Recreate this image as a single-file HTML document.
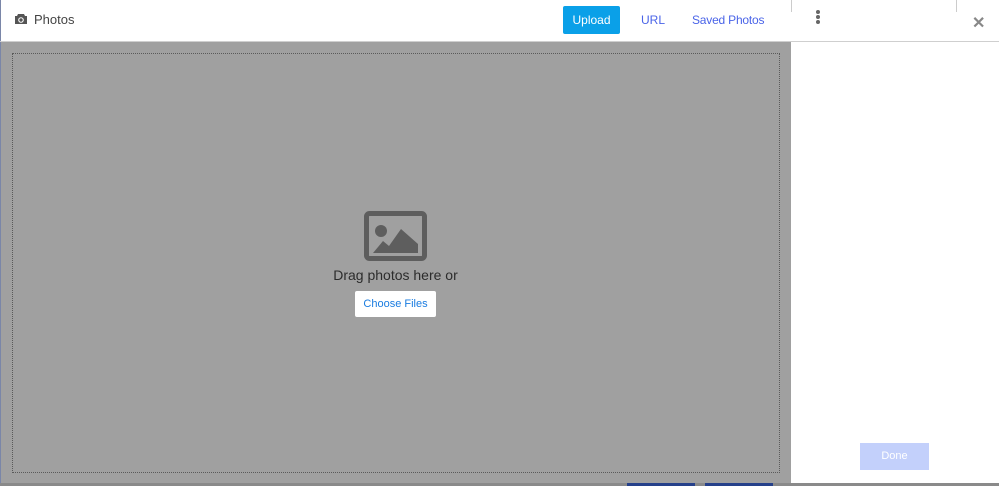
<!DOCTYPE html>
<html><head><style>
body{margin:0;width:999px;height:486px;overflow:hidden;position:relative;background:#fff;font-family:"Liberation Sans",sans-serif}
.a{position:absolute}
</style></head><body>
<div class="a" style="left:0;top:0;width:1px;height:486px;background:#7a86a8"></div>
<div class="a" style="left:0;top:41px;width:999px;height:1px;background:#cfcfcf"></div>
<svg class="a" style="left:14px;top:13px" width="14" height="12" viewBox="0 0 14 12"><path d="M4 1h6l1 2h2v8H1V3h2z" fill="#555"/><circle cx="7" cy="7" r="2.8" fill="#fff"/><circle cx="7" cy="7" r="1.7" fill="#555"/></svg>
<div class="a" style="left:34px;top:12px;font-size:13px;color:#444">Photos</div>
<div class="a" style="left:563px;top:6px;width:57px;height:28px;background:#0aa0e8;border-radius:2px;color:#fff;font-size:12px;line-height:28px;text-align:center">Upload</div>
<div class="a" style="left:641px;top:13px;font-size:12px;color:#4a64e8">URL</div>
<div class="a" style="left:692px;top:13px;font-size:12px;color:#4a64e8;letter-spacing:-0.2px">Saved Photos</div>
<div class="a" style="left:791px;top:0;width:1px;height:12px;background:#ccc"></div>
<div class="a" style="left:956px;top:0;width:1px;height:12px;background:#ccc"></div>
<div class="a" style="left:816px;top:10px;width:4px;height:4px;border-radius:2px;background:#666;box-shadow:0 5px 0 #666,0 10px 0 #666"></div>
<div class="a" style="left:972px;top:13px;font-size:16px;font-weight:bold;color:#888">✕</div>
<div class="a" style="left:1px;top:42px;width:790px;height:444px;background:#a0a0a0"></div>
<div class="a" style="left:12px;top:53px;width:766px;height:418px;border:1px dotted #5a5a5a"></div>
<div class="a" style="left:0;top:483px;width:999px;height:3px;background:#8a8a8a"></div>
<div class="a" style="left:627px;top:483px;width:68px;height:3px;background:#25408a"></div>
<div class="a" style="left:705px;top:483px;width:68px;height:3px;background:#25408a"></div>
<div class="a" style="left:792px;top:42px;width:207px;height:441px;background:#fff"></div>
<svg class="a" style="left:364px;top:211px" width="63" height="50" viewBox="0 0 63 50"><rect x="2.5" y="2.5" width="58" height="45" rx="3" fill="none" stroke="#5e5e5e" stroke-width="5"/><circle cx="17" cy="20" r="6" fill="#5e5e5e"/><path d="M9 42l10-12 6 5 12-17 17 15v9z" fill="#5e5e5e"/></svg>
<div class="a" style="left:300px;top:267px;width:191px;text-align:center;font-size:14px;color:#2c2c2c">Drag photos here or</div>
<div class="a" style="left:355px;top:291px;width:81px;height:26px;background:#fff;border-radius:2px;color:#1a7ce0;font-size:11px;line-height:26px;text-align:center">Choose Files</div>
<div class="a" style="left:860px;top:443px;width:69px;height:27px;background:#c3d0fb;color:#fff;font-size:11px;line-height:27px;text-align:center">Done</div>
</body></html>
